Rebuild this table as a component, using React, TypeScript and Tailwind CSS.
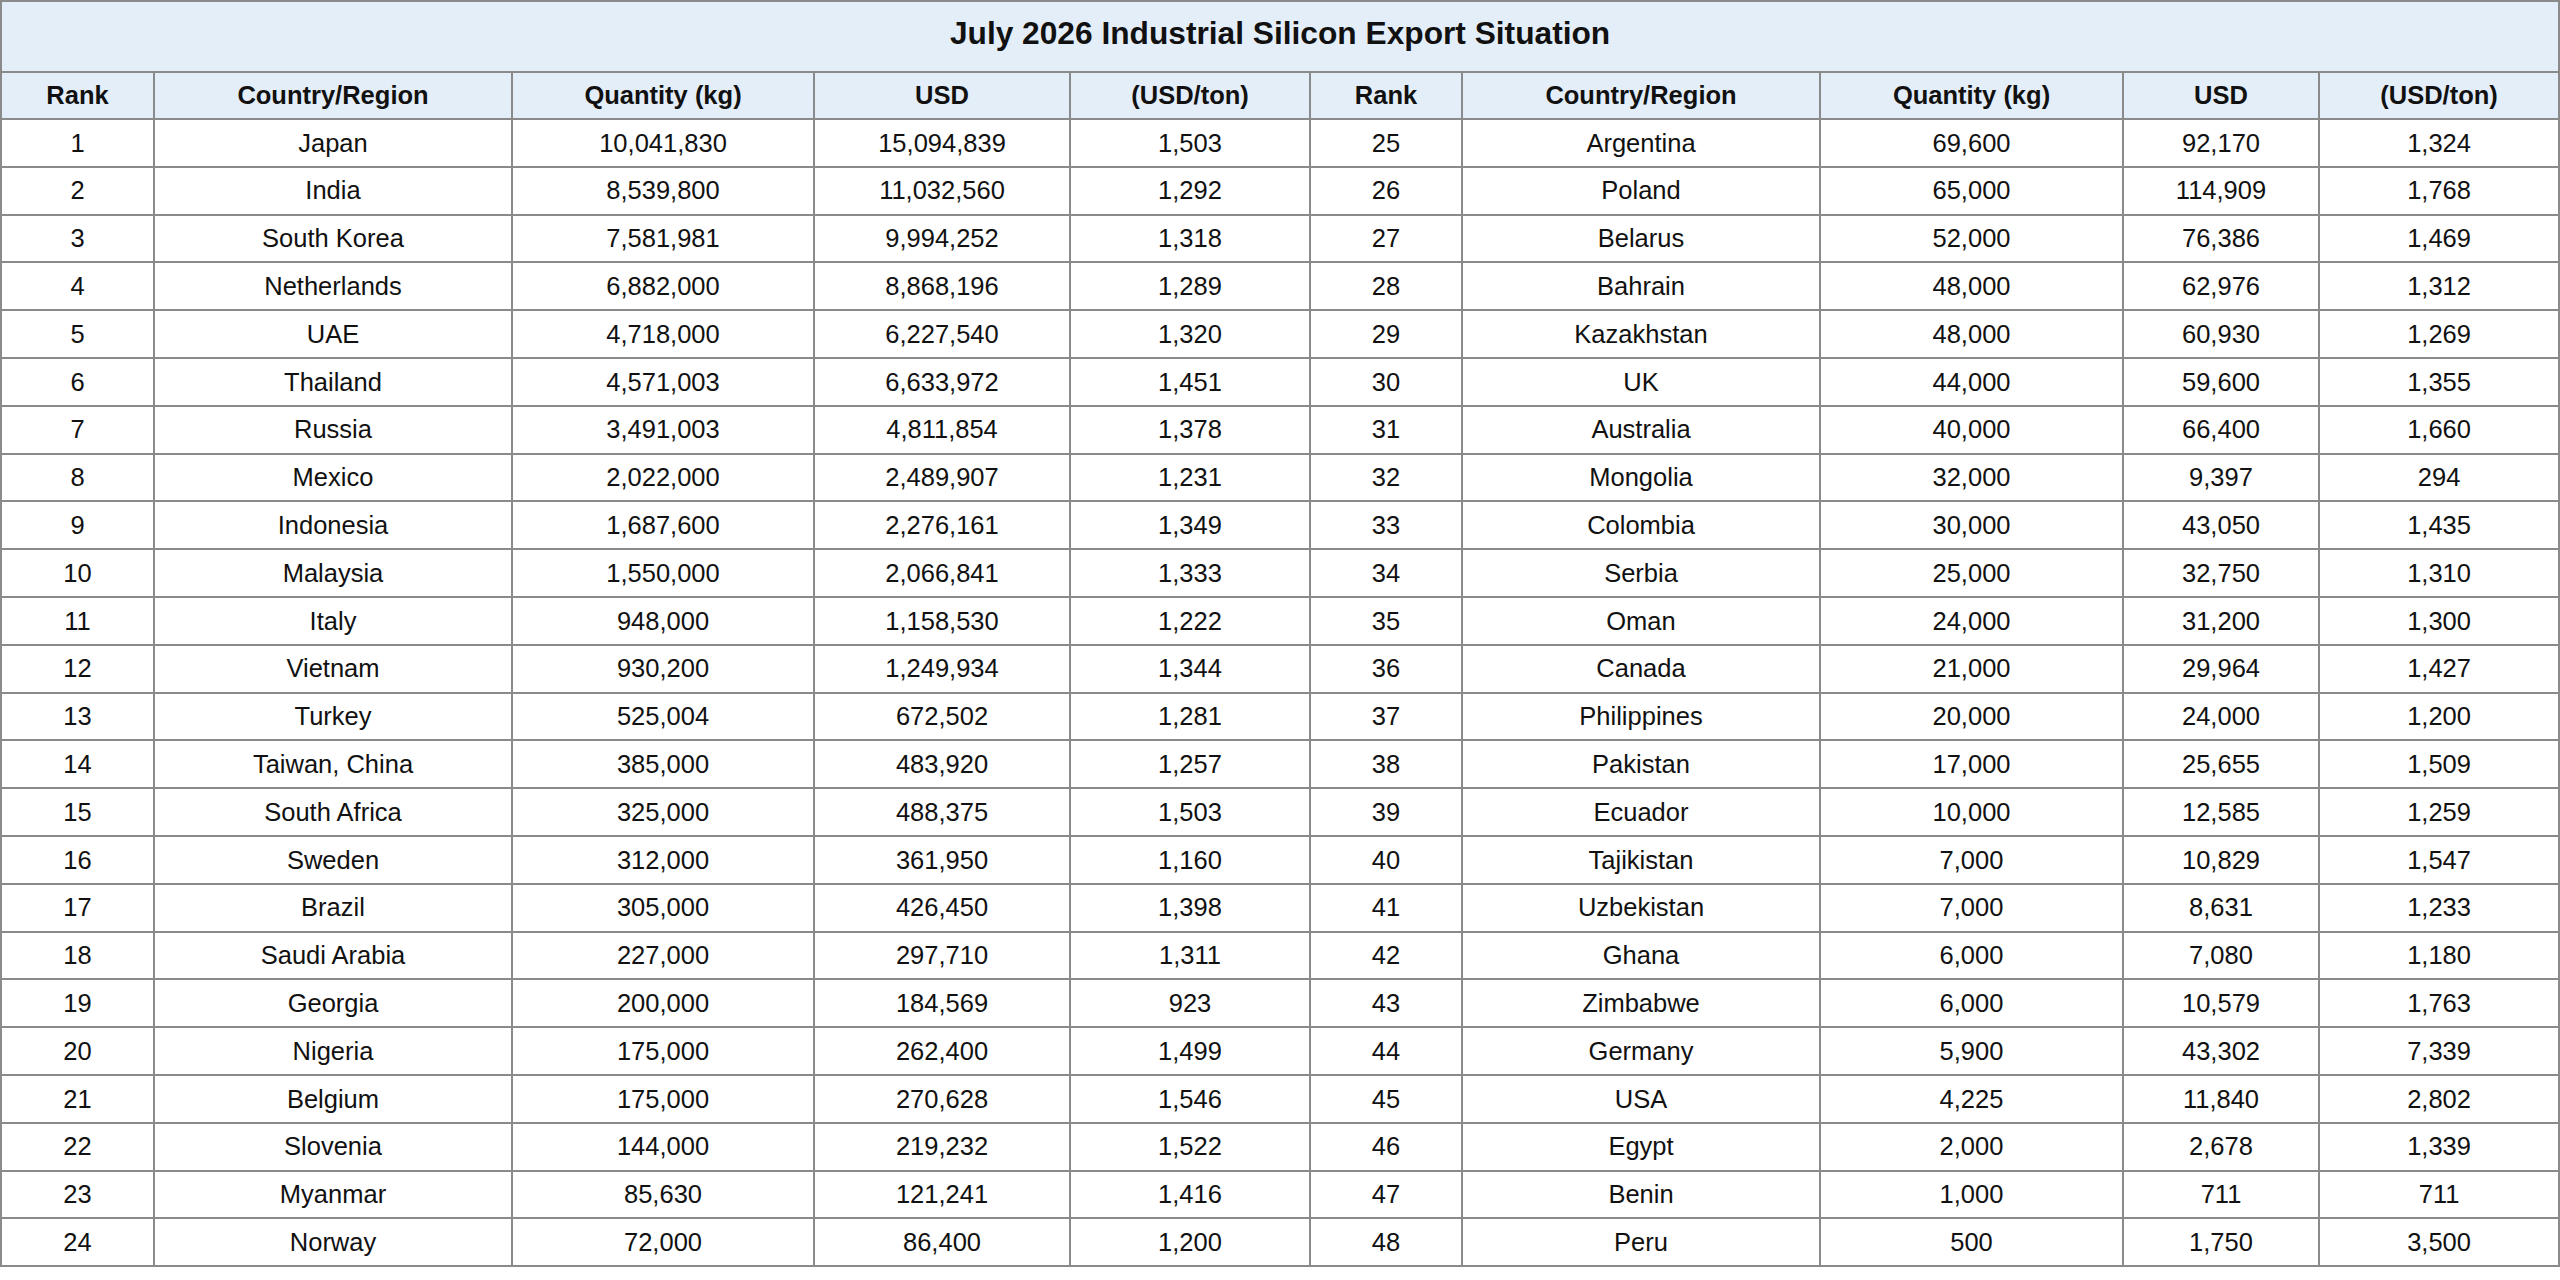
const left: [number, string, string, string, string][] = [
  [1, "Japan", "10,041,830", "15,094,839", "1,503"],
  [2, "India", "8,539,800", "11,032,560", "1,292"],
  [3, "South Korea", "7,581,981", "9,994,252", "1,318"],
  [4, "Netherlands", "6,882,000", "8,868,196", "1,289"],
  [5, "UAE", "4,718,000", "6,227,540", "1,320"],
  [6, "Thailand", "4,571,003", "6,633,972", "1,451"],
  [7, "Russia", "3,491,003", "4,811,854", "1,378"],
  [8, "Mexico", "2,022,000", "2,489,907", "1,231"],
  [9, "Indonesia", "1,687,600", "2,276,161", "1,349"],
  [10, "Malaysia", "1,550,000", "2,066,841", "1,333"],
  [11, "Italy", "948,000", "1,158,530", "1,222"],
  [12, "Vietnam", "930,200", "1,249,934", "1,344"],
  [13, "Turkey", "525,004", "672,502", "1,281"],
  [14, "Taiwan, China", "385,000", "483,920", "1,257"],
  [15, "South Africa", "325,000", "488,375", "1,503"],
  [16, "Sweden", "312,000", "361,950", "1,160"],
  [17, "Brazil", "305,000", "426,450", "1,398"],
  [18, "Saudi Arabia", "227,000", "297,710", "1,311"],
  [19, "Georgia", "200,000", "184,569", "923"],
  [20, "Nigeria", "175,000", "262,400", "1,499"],
  [21, "Belgium", "175,000", "270,628", "1,546"],
  [22, "Slovenia", "144,000", "219,232", "1,522"],
  [23, "Myanmar", "85,630", "121,241", "1,416"],
  [24, "Norway", "72,000", "86,400", "1,200"],
];

const right: [number, string, string, string, string][] = [
  [25, "Argentina", "69,600", "92,170", "1,324"],
  [26, "Poland", "65,000", "114,909", "1,768"],
  [27, "Belarus", "52,000", "76,386", "1,469"],
  [28, "Bahrain", "48,000", "62,976", "1,312"],
  [29, "Kazakhstan", "48,000", "60,930", "1,269"],
  [30, "UK", "44,000", "59,600", "1,355"],
  [31, "Australia", "40,000", "66,400", "1,660"],
  [32, "Mongolia", "32,000", "9,397", "294"],
  [33, "Colombia", "30,000", "43,050", "1,435"],
  [34, "Serbia", "25,000", "32,750", "1,310"],
  [35, "Oman", "24,000", "31,200", "1,300"],
  [36, "Canada", "21,000", "29,964", "1,427"],
  [37, "Philippines", "20,000", "24,000", "1,200"],
  [38, "Pakistan", "17,000", "25,655", "1,509"],
  [39, "Ecuador", "10,000", "12,585", "1,259"],
  [40, "Tajikistan", "7,000", "10,829", "1,547"],
  [41, "Uzbekistan", "7,000", "8,631", "1,233"],
  [42, "Ghana", "6,000", "7,080", "1,180"],
  [43, "Zimbabwe", "6,000", "10,579", "1,763"],
  [44, "Germany", "5,900", "43,302", "7,339"],
  [45, "USA", "4,225", "11,840", "2,802"],
  [46, "Egypt", "2,000", "2,678", "1,339"],
  [47, "Benin", "1,000", "711", "711"],
  [48, "Peru", "500", "1,750", "3,500"],
];

const widths = [153, 358, 302, 256, 240, 152, 358, 303, 196, 240];
const headers = ["Rank", "Country/Region", "Quantity (kg)", "USD", "(USD/ton)"];

export default function App() {
  return (
    <div
      className="w-[2560px] h-[1280px] bg-white text-[#111]"
      style={{ fontFamily: '"Liberation Sans", Arial, sans-serif' }}
    >
      <table className="w-[2560px] border-collapse table-fixed">
        <colgroup>
          {widths.map((w, i) => (
            <col key={i} style={{ width: w }} />
          ))}
        </colgroup>
        <thead>
          <tr className="h-[71px]">
            <th
              colSpan={10}
              className="border-2 border-[#8a8a8a] bg-[#e4eef9] text-[31.7px] leading-none font-bold text-center pt-0 pb-[5px]"
            >
              July 2026 Industrial Silicon Export Situation
            </th>
          </tr>
          <tr className="h-[47px]">
            {[...headers, ...headers].map((h, i) => (
              <th
                key={i}
                className="border-2 border-[#8a8a8a] bg-[#e4eef9] text-[25.5px] leading-none font-bold text-center p-0"
              >
                {h}
              </th>
            ))}
          </tr>
        </thead>
        <tbody>
          {left.map((row, i) => (
            <tr key={i} className="h-[47.8px]">
              {[...row, ...right[i]].map((c, j) => (
                <td
                  key={j}
                  className="border-2 border-[#8a8a8a] text-[25.5px] leading-none text-center p-0 pt-[1px]"
                >
                  {c}
                </td>
              ))}
            </tr>
          ))}
        </tbody>
      </table>
    </div>
  );
}
